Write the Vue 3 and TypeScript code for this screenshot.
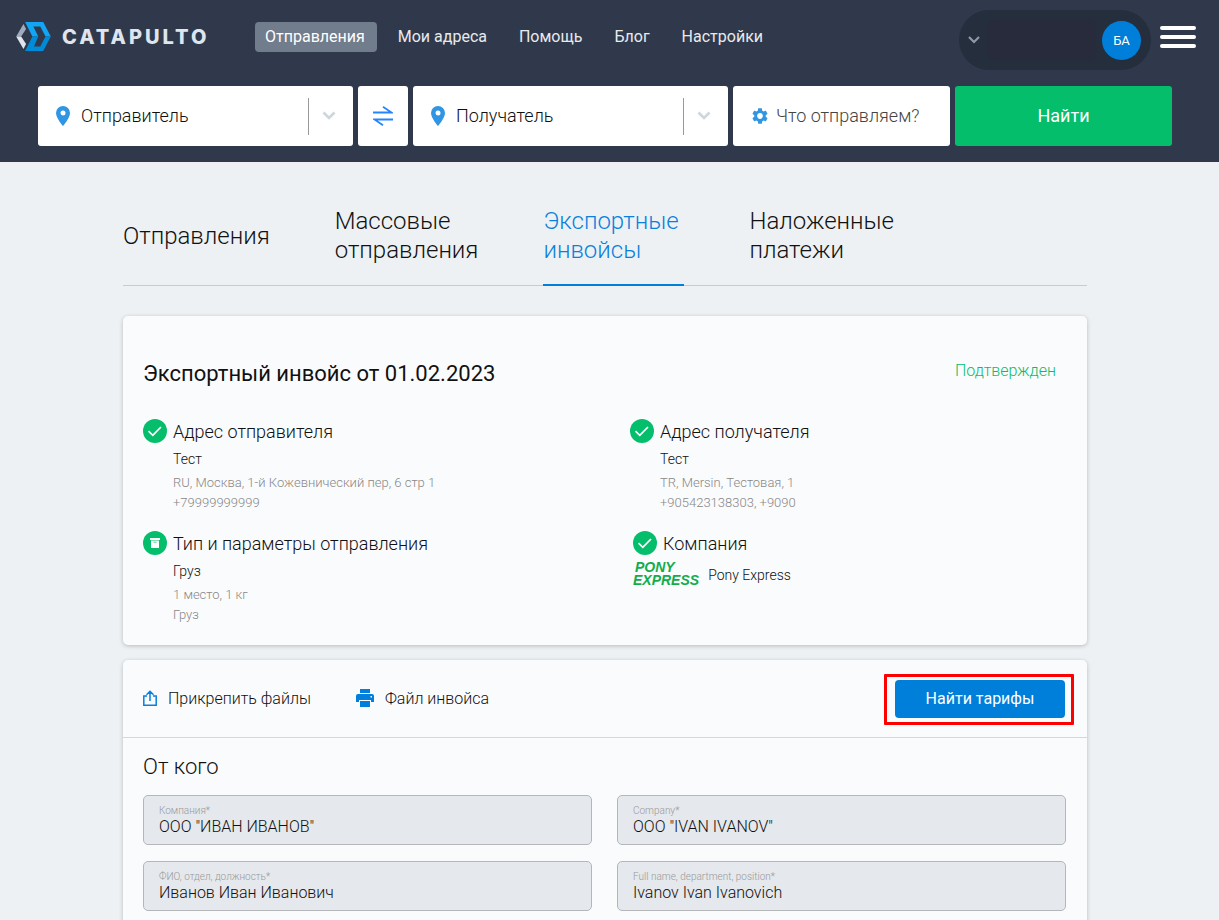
<script setup lang="ts">
import { ref } from 'vue'

interface Tab { lines: string[]; active: boolean }
interface Party { icon: 'check' | 'box'; title: string; name: string; details: string[] }
interface Field { id: string; label: string; value: string }

const nav = ['Отправления', 'Мои адреса', 'Помощь', 'Блог', 'Настройки']

const tabs: Tab[] = [
  { lines: ['Отправления'], active: false },
  { lines: ['Массовые', 'отправления'], active: false },
  { lines: ['Экспортные', 'инвойсы'], active: true },
  { lines: ['Наложенные', 'платежи'], active: false },
]

const parties: Party[] = [
  { icon: 'check', title: 'Адрес отправителя', name: 'Тест', details: ['RU, Москва, 1-й Кожевнический пер, 6 стр 1', '+79999999999'] },
  { icon: 'check', title: 'Адрес получателя', name: 'Тест', details: ['TR, Mersin, Тестовая, 1', '+905423138303, +9090'] },
  { icon: 'box', title: 'Тип и параметры отправления', name: 'Груз', details: ['1 место, 1 кг', 'Груз'] },
]

const fields = ref<Field[]>([
  { id: 'company-ru', label: 'Компания*', value: 'ООО "ИВАН ИВАНОВ"' },
  { id: 'company-en', label: 'Company*', value: 'OOO "IVAN IVANOV"' },
  { id: 'person-ru', label: 'ФИО, отдел, должность*', value: 'Иванов Иван Иванович' },
  { id: 'person-en', label: 'Full name, department, position*', value: 'Ivanov Ivan Ivanovich' },
])

const sender = ref('')
const recipient = ref('')
</script>

<template>
  <div class="page">
    <header class="header">
      <div class="topbar">
        <a href="#" class="brand">
          <svg class="brand-mark" viewBox="48 66 105 88" aria-hidden="true">
            <path fill="#9fabbd" d="M70 72 78 87 63 110H48Z" />
            <path fill="#dfe5ee" d="M48 110H63L78 133 70 148Z" />
            <path fill="#12a5f4" d="M75 66H130L153 110H137L121 80H100L115 110H97Z" />
            <path fill="#008bd8" d="M97 110H115L102 140H121L137 110H153L130 154H75Z" />
          </svg>
          <span class="brand-name">CATAPULTO</span>
        </a>
        <nav class="nav">
          <a v-for="(item, i) in nav" :key="item" href="#" class="nav-link" :class="{ current: i === 0 }">{{ item }}</a>
        </nav>
        <button type="button" class="account" aria-label="Профиль">
          <svg class="account-chevron" viewBox="0 0 14 10" aria-hidden="true"><path d="M2 2 7 7 12 2" fill="none" stroke="#9198a3" stroke-width="2.2" /></svg>
          <span class="account-name"></span>
          <span class="avatar">БА</span>
        </button>
        <button type="button" class="burger" aria-label="Меню"><span></span><span></span><span></span></button>
      </div>

      <form class="search" @submit.prevent>
        <div class="place">
          <svg class="pin" viewBox="0 0 14 20" aria-hidden="true"><path fill="#3096e3" fill-rule="evenodd" d="M7 0a7 7 0 0 0-7 7c0 5 7 13 7 13s7-8 7-13a7 7 0 0 0-7-7Zm0 4.500a2.500 2.500 0 1 1 0 5 2.500 2.500 0 0 1 0-5Z" /></svg>
          <input v-model="sender" type="text" placeholder="Отправитель" aria-label="Отправитель">
          <button type="button" class="open" aria-label="Выбрать отправителя">
            <svg viewBox="0 0 14 10" aria-hidden="true"><path d="M1.500 1.500 7 7 12.500 1.500" fill="none" stroke="#ccd6db" stroke-width="2.600" /></svg>
          </button>
        </div>
        <button type="button" class="swap" aria-label="Поменять местами">
          <svg viewBox="0 0 20 20" fill="none" stroke="#2684ff" stroke-width="1.800" aria-hidden="true"><path d="M0 6.500H18.500L10 .800M20 13.500H1.500L10 19.200" /></svg>
        </button>
        <div class="place">
          <svg class="pin" viewBox="0 0 14 20" aria-hidden="true"><path fill="#3096e3" fill-rule="evenodd" d="M7 0a7 7 0 0 0-7 7c0 5 7 13 7 13s7-8 7-13a7 7 0 0 0-7-7Zm0 4.500a2.500 2.500 0 1 1 0 5 2.500 2.500 0 0 1 0-5Z" /></svg>
          <input v-model="recipient" type="text" placeholder="Получатель" aria-label="Получатель">
          <button type="button" class="open" aria-label="Выбрать получателя">
            <svg viewBox="0 0 14 10" aria-hidden="true"><path d="M1.500 1.500 7 7 12.500 1.500" fill="none" stroke="#ccd6db" stroke-width="2.600" /></svg>
          </button>
        </div>
        <button type="button" class="parcel">
          <svg viewBox="2 2 20 20" aria-hidden="true"><path fill="#3096e3" d="M19.140 12.940c.040-.300.060-.610.060-.940 0-.320-.020-.640-.070-.940l2.030-1.580c.180-.140.230-.410.120-.610l-1.920-3.320c-.120-.220-.370-.290-.590-.220l-2.390.960c-.500-.380-1.030-.700-1.620-.940l-.360-2.540c-.040-.240-.240-.410-.480-.410h-3.840c-.240 0-.430.170-.470.410l-.360 2.540c-.590.240-1.130.570-1.620.940l-2.390-.960c-.220-.080-.470 0-.590.220L2.740 8.870c-.120.210-.080.470.120.610l2.030 1.580c-.050.300-.090.630-.090.940s.020.640.070.940l-2.030 1.580c-.180.140-.230.410-.120.610l1.920 3.320c.120.220.370.290.590.220l2.390-.960c.500.380 1.030.700 1.620.940l.360 2.540c.050.240.240.410.480.410h3.840c.240 0 .440-.170.470-.410l.360-2.540c.590-.240 1.130-.560 1.620-.940l2.390.960c.220.080.470 0 .590-.220l1.920-3.320c.120-.220.070-.470-.120-.610l-2.010-1.580ZM12 15.600c-1.980 0-3.600-1.620-3.600-3.600s1.620-3.600 3.600-3.600 3.600 1.620 3.600 3.600-1.620 3.600-3.600 3.600Z" /></svg>
          <span>Что отправляем?</span>
        </button>
        <button type="submit" class="find">Найти</button>
      </form>
    </header>

    <main class="main">
      <nav class="tabs">
        <a v-for="tab in tabs" :key="tab.lines.join(' ')" href="#" class="tab" :class="{ active: tab.active }">
          <span v-for="line in tab.lines" :key="line">{{ line }}</span>
        </a>
      </nav>

      <section class="card summary">
        <div class="summary-head">
          <h1>Экспортный инвойс от 01.02.2023</h1>
          <span class="status">Подтвержден</span>
        </div>
        <div class="parties">
          <div v-for="party in parties" :key="party.title" class="party">
            <svg class="badge" viewBox="0 0 24 24" aria-hidden="true">
              <circle cx="12" cy="12" r="12" fill="#04be6c" />
              <path v-if="party.icon === 'check'" d="M5.500 12.200 9.800 16.300 18 8" fill="none" stroke="#fff" stroke-width="1.700" />
              <path v-else fill="#fff" fill-rule="evenodd" d="M7 7h10v2H7ZM8 9.500h8V17H8ZM10.500 10.800v.800h3v-.800Z" />
            </svg>
            <h2>{{ party.title }}</h2>
            <div class="party-body">
              <p class="party-name">{{ party.name }}</p>
              <p v-for="d in party.details" :key="d" class="party-detail">{{ d }}</p>
            </div>
          </div>
          <div class="party company">
            <svg class="badge" viewBox="0 0 24 24" aria-hidden="true">
              <circle cx="12" cy="12" r="12" fill="#04be6c" />
              <path d="M5.500 12.200 9.800 16.300 18 8" fill="none" stroke="#fff" stroke-width="1.700" />
            </svg>
            <h2>Компания</h2>
            <div class="carrier">
              <span class="carrier-logo">PONY<br>EXPRESS</span>
              <span class="carrier-name">Pony Express</span>
            </div>
          </div>
        </div>
      </section>

      <section class="card">
        <div class="toolbar">
          <button type="button" class="tool attach">
            <svg class="upload" viewBox="0 0 14 16" fill="none" stroke="#0a80dc" stroke-width="1.500" aria-hidden="true"><path d="M4 6H.800V15.200H13.200V6H10M7 11V1.500M3.500 4.700 7 1.200 10.500 4.700" /></svg>
            <span>Прикрепить файлы</span>
          </button>
          <button type="button" class="tool">
            <svg class="printer" viewBox="0 0 18 18" aria-hidden="true">
              <path fill="#0080dc" fill-rule="evenodd" d="M4 0H14V4H4ZM2 5H16a2 2 0 0 1 2 2V13H15V11H3V13H0V7a2 2 0 0 1 2-2ZM14.500 7v1.500H16V7ZM4 12H14V18H4Z" />
            </svg>
            <span>Файл инвойса</span>
          </button>
          <div class="rates">
            <button type="button" class="rates-button">Найти тарифы</button>
            <span class="rates-frame"></span>
          </div>
        </div>
        <div class="from">
          <h2 class="from-title">От кого</h2>
          <div class="fields">
            <div v-for="field in fields" :key="field.id" class="field">
              <label :for="field.id">{{ field.label }}</label>
              <input :id="field.id" v-model="field.value" type="text" readonly>
            </div>
          </div>
        </div>
      </section>
    </main>
  </div>
</template>

<style>
html { scrollbar-width: none; }
body { margin: 0; background: #edf1f4; }
</style>

<style scoped>
.page, .page * { box-sizing: border-box; }
.page {
  min-height: 100vh;
  font-family: Roboto, "Noto Sans", sans-serif;
  font-weight: 300;
  color: #111;
  background: #edf1f4;
}
h1, h2, p { margin: 0; font-weight: 300; }
a { color: inherit; text-decoration: none; }
button, input { font: inherit; color: inherit; border: 0; padding: 0; margin: 0; background: none; }
button { cursor: pointer; }
svg { display: block; flex: none; }

.header { background: #2f394b; padding-bottom: 16px; }
.topbar { display: flex; align-items: flex-start; height: 86px; padding: 10px 23px 0 16px; }
.brand { display: flex; align-items: flex-start; gap: 11px; margin-top: 12px; width: 239px; }
.brand-mark { width: 35px; height: 29px; }
.brand-name { font-family: Inter, sans-serif; font-weight: 800; font-size: 20px; line-height: 30px; letter-spacing: 3px; color: #dfe5ee; }
.nav { display: flex; gap: 32px; margin-top: 12px; flex: 1; }
.nav-link { font-size: 16px; font-weight: 400; line-height: 30px; color: #e8eaee; white-space: nowrap; }
.nav-link.current { margin-right: -11px; padding: 0 12px 0 10px; border-radius: 4px; background: #717c8c; color: #fff; }
.account { display: flex; align-items: center; width: 192px; height: 60px; padding: 0 10px 0 8px; border-radius: 30px; background: #252e3d; }
.account-chevron { width: 14px; height: 10px; }
.account-name { flex: 1; height: 40px; margin: 0 6px; border-radius: 8px; background: #272b3b; }
.avatar { display: block; width: 39px; height: 39px; border-radius: 50%; background: #007fda; color: #fff; font-size: 13px; font-weight: 400; line-height: 39px; text-align: center; }
.burger { display: grid; gap: 5px; width: 36px; margin: 16px 0 0 9px; }
.burger span { height: 4px; border-radius: 2px; background: #fff; }

.search { display: grid; grid-template-columns: 315fr 50px 315fr 217fr 217fr; gap: 5px; height: 60px; padding: 0 47px 0 38px; font-size: 18px; }
.place, .swap, .parcel { display: flex; align-items: center; min-width: 0; border-radius: 3px; background: #fff; }
.place { padding-left: 18px; }
.pin { width: 14px; height: 20px; }
.place input { flex: 1; min-width: 0; height: 40px; padding: 0 11px 2px; outline: none; }
.place input::placeholder { color: #111; opacity: 1; }
.open { display: flex; align-items: center; justify-content: center; width: 45px; height: 37px; border-left: 1px solid #999; padding-right: 4px; }
.open svg { width: 14px; height: 10px; }
.swap { justify-content: center; }
.swap svg { width: 20px; height: 20px; }
.parcel { gap: 8px; padding-left: 19px; color: #444; white-space: nowrap; }
.parcel svg { width: 16px; height: 16px; }
.parcel span { padding-bottom: 2px; }
.find { padding-bottom: 2px; border-radius: 3px; background: #04be6c; color: #fff; font-weight: 400; }

.main { padding: 44px 132px 25px 123px; }
.tabs { display: flex; gap: 65px; height: 80px; border-bottom: 1px solid #c6ccd1; font-size: 24px; line-height: 29px; }
.tab { display: flex; flex-direction: column; justify-content: center; height: 80px; padding-bottom: 18px; border-bottom: 2px solid transparent; white-space: nowrap; }
.tab.active { color: #0a80dc; border-bottom-color: #0080dc; width: 141px; }

.card { border-radius: 5px; background: #fafbfd; box-shadow: 0 1px 4px rgba(0, 0, 0, .22); }
.summary { margin: 30px 0 15px; padding: 45px 0 20px 20px; }
.summary-head { display: flex; justify-content: space-between; padding-right: 31px; }
h1 { font-size: 22px; font-weight: 400; line-height: 26px; }
.status { color: #04be6c; font-size: 16px; line-height: 20px; }
.parties { display: grid; grid-template-columns: 1fr 1fr; gap: 18px 30px; margin-top: 32px; }
.party { display: grid; grid-template-columns: 24px 1fr; column-gap: 6px; align-content: start; }
.badge { width: 24px; height: 24px; }
.party h2 { font-size: 18px; line-height: 26px; }
.party-body { grid-column: 2; }
.party-name { font-size: 14px; line-height: 20px; margin: 4px 0; }
.party-detail { font-size: 13px; line-height: 20px; color: #888; }
.company { padding-left: 3px; }
.carrier { grid-column: 1 / -1; display: flex; align-items: center; gap: 9px; margin-top: 4px; }
.carrier-logo { padding-bottom: 1px; color: #14ac4b; font: italic bold 14px/13px "Liberation Sans", Arial, sans-serif; text-indent: 2px; }
.carrier-name { font-size: 14px; line-height: 20px; }

.toolbar { display: flex; align-items: center; height: 78px; padding: 1px 22px 0 20px; border-bottom: 1px solid #d3d8e0; font-size: 16px; }
.tool { display: flex; align-items: center; gap: 11px; padding-bottom: 2px; white-space: nowrap; }
.attach { margin-right: 45px; }
.upload { width: 14px; height: 16px; }
.printer { width: 18px; height: 18px; }
.rates { position: relative; margin-left: auto; }
.rates-button { width: 170px; height: 38px; padding-bottom: 2px; border-radius: 4px; background: #007fda; color: #fff; font-weight: 400; }
.rates-frame { position: absolute; inset: -6px -9px -7px -11px; border: 3px solid #f00; border-radius: 1px; pointer-events: none; }
.from { padding: 16px 21px 25px 20px; }
.from-title { font-size: 22px; line-height: 26px; }
.fields { display: grid; grid-template-columns: 1fr 1fr; gap: 16px 25px; margin-top: 15px; }
.field { display: flex; flex-direction: column; height: 50px; padding: 9px 14px 0 15px; border: 1px solid #b4b6ba; border-radius: 5px; background: #e5e8ec; }
.field label { font-size: 10px; line-height: 12px; color: #999; }
.field input { height: 20px; font-size: 16px; line-height: 20px; outline: none; }
</style>
